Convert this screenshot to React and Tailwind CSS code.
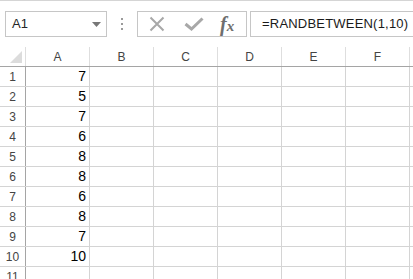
import React from 'react';

const values = [7, 5, 7, 6, 8, 8, 6, 8, 7, 10];
const columns = ['A', 'B', 'C', 'D', 'E', 'F'];

const uiFont = { fontFamily: '"Liberation Sans", Arial, sans-serif' };

const NameBox = () => (
  <div className="ml-[5px] flex h-[26px] w-[102px] items-center justify-between border border-[#c6c6c6] bg-white pl-[6px] pr-[5px]">
    <span className="text-[13px] text-[#262626]">A1</span>
    <svg width="9" height="5" viewBox="0 0 9 5">
      <path d="M0 0 L9 0 L4.5 5 Z" fill="#777" />
    </svg>
  </div>
);

const Dots = () => (
  <div className="flex h-[26px] w-[30px] flex-col items-center justify-center gap-[3px]">
    <span className="h-[2px] w-[2px] bg-[#9a9a9a]" />
    <span className="h-[2px] w-[2px] bg-[#9a9a9a]" />
    <span className="h-[2px] w-[2px] bg-[#9a9a9a]" />
  </div>
);

const FormulaButtons = () => (
  <div className="flex h-[26px] w-[110px] items-center border border-[#c6c6c6] bg-white">
    {/* cancel */}
    <svg className="ml-[11px]" width="16" height="16" viewBox="0 0 16 16">
      <path d="M1.5 1.5 L14.5 14.5 M14.5 1.5 L1.5 14.5" stroke="#a8a8a8" strokeWidth="2" />
    </svg>
    {/* enter */}
    <svg className="ml-[19px]" width="20" height="14" viewBox="0 0 20 14">
      <path d="M1.5 7 L7.5 12 L18.5 1.5" stroke="#a8a8a8" strokeWidth="3" fill="none" />
    </svg>
    <span
      className="ml-[16px] text-[20px] italic leading-none text-[#6e6e6e]"
      style={{ fontFamily: '"Liberation Serif", "Times New Roman", serif' }}
    >
      <span className="font-semibold">f</span>
      <span className="text-[15px] font-semibold">x</span>
    </span>
  </div>
);

const FormulaInput = () => (
  <div className="ml-[3px] flex h-[26px] flex-1 items-center border border-r-0 border-[#c6c6c6] bg-white pl-[11px]">
    <span className="text-[13px] tracking-[0.2px] text-[#1a1a1a]">=RANDBETWEEN(1,10)</span>
  </div>
);

const HeaderRow = () => (
  <div className="flex h-[20px] border-b border-[#a5a5a5]">
    <div className="flex w-[26px] items-end justify-end border-r border-[#dedede] pb-[3px] pr-[3px]">
      <svg width="12" height="12" viewBox="0 0 12 12">
        <path d="M12 0 L12 12 L0 12 Z" fill="#dcdcdc" />
      </svg>
    </div>
    {columns.map((c) => (
      <div
        key={c}
        className="flex w-[64px] items-center justify-center border-r border-[#dedede] text-[12px] text-[#444]"
      >
        {c}
      </div>
    ))}
    <div className="flex-1" />
  </div>
);

const Row = ({ n, value }) => (
  <div className="flex h-[20px] border-b border-[#d4d4d4]">
    <div className="flex w-[26px] items-center justify-center border-r border-[#a5a5a5] text-[12px] text-[#444]">
      {n}
    </div>
    {columns.map((c, i) => (
      <div
        key={c}
        className="flex w-[64px] items-center justify-end border-r border-[#d4d4d4] pr-[3px] text-[14px] text-black"
      >
        {i === 0 ? value : ''}
      </div>
    ))}
    <div className="flex-1" />
  </div>
);

export default function App() {
  return (
    <div className="h-[279px] w-[413px] overflow-hidden bg-white" style={uiFont}>
      {/* formula bar */}
      <div className="flex h-[47px] items-start border-t border-[#d5d5d5] pt-[10px]">
        <NameBox />
        <Dots />
        <FormulaButtons />
        <FormulaInput />
      </div>

      {/* sheet */}
      <div>
        <HeaderRow />
        {values.map((v, i) => (
          <Row key={i} n={i + 1} value={v} />
        ))}
        <Row n={11} value="" />
      </div>
    </div>
  );
}
